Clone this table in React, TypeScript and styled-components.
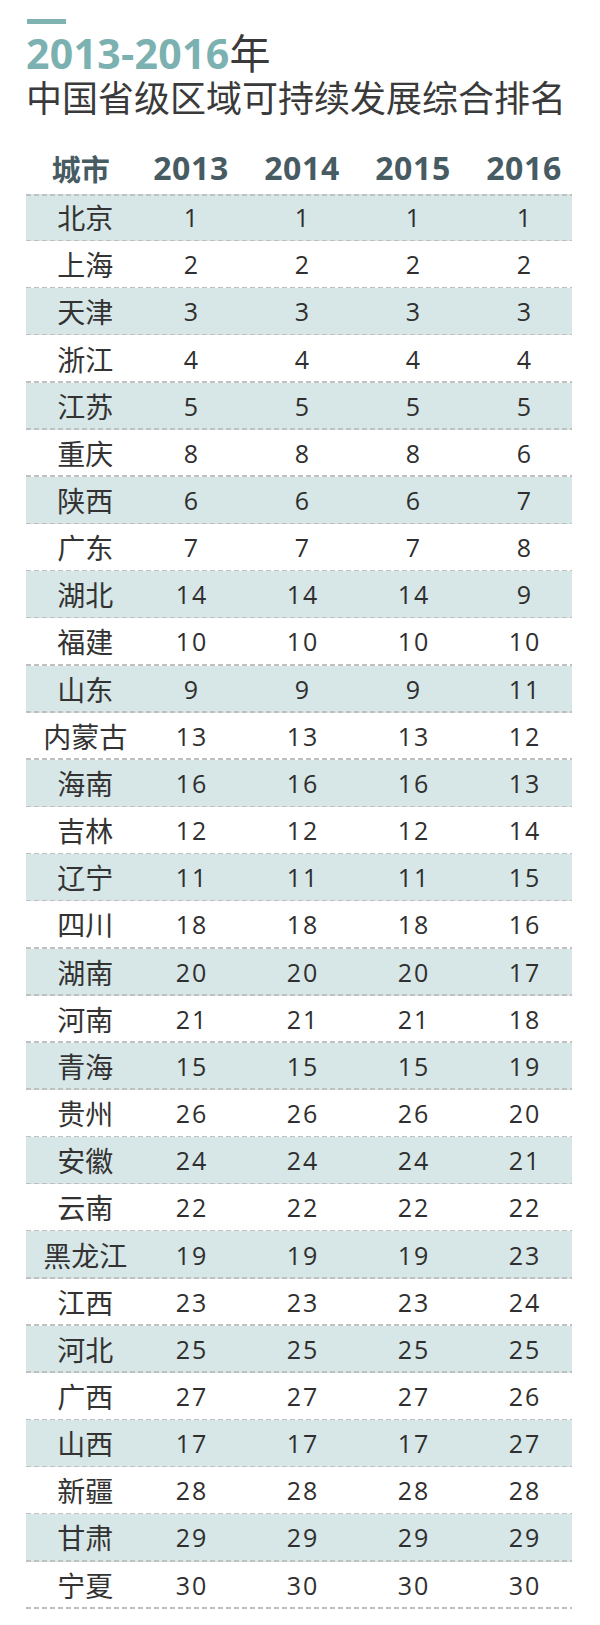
import React from "react";
import styled, { createGlobalStyle } from "styled-components";

const Global = createGlobalStyle`
  html, body { margin: 0; padding: 0; background: #ffffff; }
  body { font-family: "Open Sans", "Noto Sans CJK SC", sans-serif; }
`;

const Page = styled.div`
  width: 600px;
  min-height: 1625px;
  box-sizing: border-box;
  padding: 19px 28px 0 26px;
`;

const Accent = styled.div`
  width: 39px;
  height: 5px;
  margin-left: 1px;
  background: #7fb3b2;
`;

const TitleYears = styled.div`
  margin-top: 7px;
  font-size: 41px;
  line-height: 40px;
  font-weight: 700;
  color: #7bb1b0;
  white-space: nowrap;
  letter-spacing: 0.3px;
`;

const TitleYear = styled.span`
  font-family: "Noto Sans CJK SC", sans-serif;
  font-weight: 400;
  color: #3a3a3a;
`;

const TitleMain = styled.div`
  font-family: "Noto Sans CJK SC", sans-serif;
  font-size: 36px;
  line-height: 46px;
  color: #3a3a3a;
  white-space: nowrap;
`;

const Table = styled.div`
  width: 546px;
`;

const HeadRow = styled.div`
  display: grid;
  grid-template-columns: 109.5px 111px 111px 111px 103.5px;
  padding-top: 29px;
  padding-bottom: 6px;
  height: 40px;
`;

const HeadCell = styled.div<{ $last?: boolean; $city?: boolean }>`
  text-align: center;
  font-family: ${(p) => (p.$city ? `"Noto Sans CJK SC", sans-serif` : `"Open Sans", sans-serif`)};
  font-size: ${(p) => (p.$city ? "29px" : "32px")};
  letter-spacing: ${(p) => (p.$city ? "0" : "0.6px")};
  line-height: 40px;
  font-weight: 700;
  color: #475b63;
  padding-left: ${(p) => (p.$last ? "7.5px" : "0")};
  white-space: nowrap;
`;

const Row = styled.div<{ $shade: boolean; $first: boolean }>`
  position: relative;
  display: grid;
  grid-template-columns: 109.5px 111px 111px 111px 103.5px;
  height: 47.17px;
  align-items: center;
  background: ${(p) => (p.$shade ? "#d7e6e6" : "#ffffff")};

  &::after {
    content: "";
    position: absolute;
    left: 0;
    right: 0;
    bottom: 0;
    height: 1.5px;
    background: repeating-linear-gradient(90deg, #c0c0c0 0 5px, transparent 5px 8px);
  }

  &::before {
    content: "";
    display: ${(p) => (p.$first ? "block" : "none")};
    position: absolute;
    left: 0;
    right: 0;
    top: 0;
    height: 1.5px;
    background: repeating-linear-gradient(90deg, #c0c0c0 0 5px, transparent 5px 8px);
  }
`;

const CityCell = styled.div`
  text-align: center;
  padding-left: 9px;
  font-family: "Noto Sans CJK SC", sans-serif;
  font-size: 28px;
  line-height: 47px;
  color: #333333;
  white-space: nowrap;
`;

const NumCell = styled.div<{ $last?: boolean }>`
  text-align: center;
  padding-left: ${(p) => (p.$last ? "9.5px" : "2px")};
  font-family: "Open Sans", sans-serif;
  font-size: 25px;
  letter-spacing: 2px;
  line-height: 47px;
  color: #2f2f2f;
`;

const data: [string, number, number, number, number][] = [
  ["北京", 1, 1, 1, 1],
  ["上海", 2, 2, 2, 2],
  ["天津", 3, 3, 3, 3],
  ["浙江", 4, 4, 4, 4],
  ["江苏", 5, 5, 5, 5],
  ["重庆", 8, 8, 8, 6],
  ["陕西", 6, 6, 6, 7],
  ["广东", 7, 7, 7, 8],
  ["湖北", 14, 14, 14, 9],
  ["福建", 10, 10, 10, 10],
  ["山东", 9, 9, 9, 11],
  ["内蒙古", 13, 13, 13, 12],
  ["海南", 16, 16, 16, 13],
  ["吉林", 12, 12, 12, 14],
  ["辽宁", 11, 11, 11, 15],
  ["四川", 18, 18, 18, 16],
  ["湖南", 20, 20, 20, 17],
  ["河南", 21, 21, 21, 18],
  ["青海", 15, 15, 15, 19],
  ["贵州", 26, 26, 26, 20],
  ["安徽", 24, 24, 24, 21],
  ["云南", 22, 22, 22, 22],
  ["黑龙江", 19, 19, 19, 23],
  ["江西", 23, 23, 23, 24],
  ["河北", 25, 25, 25, 25],
  ["广西", 27, 27, 27, 26],
  ["山西", 17, 17, 17, 27],
  ["新疆", 28, 28, 28, 28],
  ["甘肃", 29, 29, 29, 29],
  ["宁夏", 30, 30, 30, 30],
];

export default function App() {
  return (
    <>
      <Global />
      <Page>
        <Accent />
        <TitleYears>
          2013-2016<TitleYear>年</TitleYear>
        </TitleYears>
        <TitleMain>中国省级区域可持续发展综合排名</TitleMain>
        <Table>
          <HeadRow>
            <HeadCell $city>城市</HeadCell>
            <HeadCell>2013</HeadCell>
            <HeadCell>2014</HeadCell>
            <HeadCell>2015</HeadCell>
            <HeadCell $last>2016</HeadCell>
          </HeadRow>
          {data.map(([city, a, b, c, d], i) => (
            <Row key={city} $shade={i % 2 === 0} $first={i === 0}>
              <CityCell>{city}</CityCell>
              <NumCell>{a}</NumCell>
              <NumCell>{b}</NumCell>
              <NumCell>{c}</NumCell>
              <NumCell $last>{d}</NumCell>
            </Row>
          ))}
        </Table>
      </Page>
    </>
  );
}
